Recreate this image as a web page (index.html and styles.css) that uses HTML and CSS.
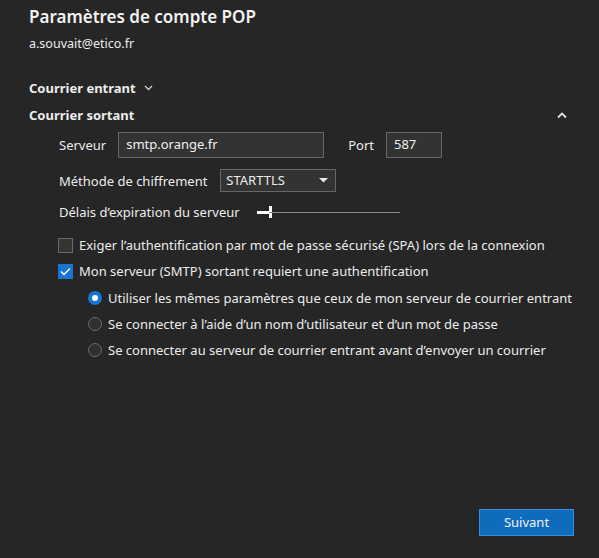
FILE: index.html
```html
<!DOCTYPE html>
<html lang="fr">

<head>
    <meta charset="UTF-8">
    <meta name="viewport" content="width=device-width, initial-scale=1.0">
    <title>Paramètres de compte POP</title>
    <link rel="stylesheet" href="styles.css">
</head>

<body>
    <div class="page">
        <h1 class="title">Paramètres de compte POP</h1>
        <div class="email">a.souvait@etico.fr</div>

        <div class="section-head first">
            <span>Courrier entrant</span>
            <svg class="chev-down" width="9" height="6" viewBox="0 0 9 6">
                <path d="M1 1 L4.5 4.5 L8 1" fill="none" stroke="#d0d0d0" stroke-width="1.3"/>
            </svg>
        </div>

        <div class="section-head open">
            <span>Courrier sortant</span>
            <svg class="chev-up" width="10" height="7" viewBox="0 0 10 7">
                <path d="M1 5.5 L5 1.5 L9 5.5" fill="none" stroke="#e0e0e0" stroke-width="1.8"/>
            </svg>
        </div>

        <div class="form">
            <div class="row row-server">
                <label class="lbl" for="server">Serveur</label>
                <input class="field server" id="server" type="text" value="smtp.orange.fr">
                <label class="lbl port-lbl" for="port">Port</label>
                <input class="field port" id="port" type="text" value="587">
            </div>

            <div class="row row-crypt">
                <span class="lbl">Méthode de chiffrement</span>
                <div class="select">
                    <span>STARTTLS</span>
                    <svg width="9" height="5" viewBox="0 0 9 5"><path d="M0 0 H9 L4.5 4.5 Z" fill="#e6e6e6"/></svg>
                </div>
            </div>

            <div class="row row-timeout">
                <span class="lbl">Délais d’expiration du serveur</span>
                <div class="slider">
                    <div class="slider-fill"></div>
                    <div class="slider-thumb"></div>
                    <div class="slider-track"></div>
                </div>
            </div>

            <div class="check first-check">
                <span class="box"></span>
                <span>Exiger l’authentification par mot de passe sécurisé (SPA) lors de la connexion</span>
            </div>
            <div class="check">
                <span class="box checked">
                    <svg width="11" height="9" viewBox="0 0 11 9"><path d="M1 4.5 L4 7.5 L10 1.5" fill="none" stroke="#fff" stroke-width="1.4"/></svg>
                </span>
                <span>Mon serveur (SMTP) sortant requiert une authentification</span>
            </div>

            <div class="radios">
                <div class="radio">
                    <span class="dot selected"></span>
                    <span>Utiliser les mêmes paramètres que ceux de mon serveur de courrier entrant</span>
                </div>
                <div class="radio">
                    <span class="dot"></span>
                    <span>Se connecter à l’aide d’un nom d’utilisateur et d’un mot de passe</span>
                </div>
                <div class="radio">
                    <span class="dot"></span>
                    <span>Se connecter au serveur de courrier entrant avant d’envoyer un courrier</span>
                </div>
            </div>
        </div>

        <div class="footer">
            <button class="next" type="button">Suivant</button>
        </div>
    </div>
</body>

</html>
```

FILE: styles.css
```css
/* Dark account settings dialog */

html,
body {
    margin: 0;
    padding: 0;
    height: 100%;
    background-color: #262626;
}

body {
    font-family: "Noto Sans", "Open Sans", sans-serif;
    font-size: 13px;
    color: #ececec;
}

.page {
    height: 100%;
    box-sizing: border-box;
    display: flex;
    flex-direction: column;
    padding: 5px 32px 22px 29px;
}

.title {
    margin: 0;
    font-size: 17px;
    font-weight: 600;
    line-height: 24px;
    color: #f2f2f2;
}

.email {
    margin-top: 6px;
    line-height: 18px;
    font-size: 12.5px;
}

.section-head {
    display: flex;
    align-items: center;
    height: 20px;
    font-weight: 700;
    font-size: 13px;
    margin-top: 7px;
}

.section-head.first {
    margin-top: 25px;
}

.chev-down {
    margin-left: 8px;
}

.chev-up {
    margin-left: auto;
}

.form {
    padding-left: 30px;
    display: flex;
    flex-direction: column;
}

.row {
    display: flex;
    align-items: center;
}

.lbl {
    white-space: nowrap;
}

.row-server {
    height: 26px;
    margin-top: 7px;
}

.field {
    box-sizing: border-box;
    height: 26px;
    background-color: #333333;
    border: 1px solid #666666;
    color: #f0f0f0;
    font-family: inherit;
    font-size: 13px;
    padding: 0 7px 3px;
    outline: none;
}

.server {
    width: 206px;
    margin-left: 12px;
}

.port-lbl {
    margin-left: 24px;
}

.port {
    width: 56px;
    margin-left: 12px;
}

.row-crypt {
    height: 23px;
    margin-top: 11px;
}

.select {
    box-sizing: border-box;
    height: 23px;
    width: 116px;
    margin-left: 13px;
    display: flex;
    align-items: center;
    justify-content: space-between;
    padding: 0 7px 0 5px;
    background-color: #333333;
    border: 1px solid #666666;
}

.select span {
    margin-bottom: 2px;
}

.row-timeout {
    height: 20px;
    margin-top: 10px;
}

.slider {
    position: relative;
    width: 143px;
    height: 12px;
    margin-left: 17px;
}

.slider-track {
    position: absolute;
    left: 12px;
    right: 0;
    top: 6px;
    height: 1px;
    background-color: #8a8a8a;
}

.slider-fill {
    position: absolute;
    left: 0;
    width: 13px;
    top: 5px;
    height: 3px;
    background-color: #ffffff;
}

.slider-thumb {
    position: absolute;
    left: 12px;
    top: 0;
    width: 3px;
    height: 12px;
    background-color: #ffffff;
}

.check,
.radio {
    display: flex;
    align-items: center;
    height: 20px;
    white-space: nowrap;
}

.check {
    margin-left: -1px;
    margin-top: 6px;
}

.first-check {
    margin-top: 13px;
}

.box {
    flex-shrink: 0;
    box-sizing: border-box;
    width: 15px;
    height: 15px;
    margin-right: 6px;
    border: 1px solid #6a6a6a;
    background-color: #343434;
    display: flex;
    align-items: center;
    justify-content: center;
}

.box.checked {
    background-color: #1a74d1;
    border-color: #1a74d1;
}

.radios {
    padding-left: 29px;
    display: flex;
    flex-direction: column;
    gap: 6px;
    margin-top: 7px;
}

.dot {
    flex-shrink: 0;
    box-sizing: border-box;
    width: 14px;
    height: 14px;
    border-radius: 50%;
    border: 1px solid #6a6a6a;
    background-color: #303030;
    margin-right: 6px;
}

.dot.selected {
    background-color: #ffffff;
    border: 4px solid #1a74d1;
}

.footer {
    margin-top: auto;
    display: flex;
    justify-content: flex-end;
}

.next {
    box-sizing: border-box;
    width: 95px;
    height: 27px;
    margin-right: -7px;
    background-color: #0f6cbd;
    border: 1px solid #3590e0;
    color: #f2f2f2;
    font-family: inherit;
    font-size: 13px;
    padding: 0 0 2px;
    cursor: pointer;
}
```
